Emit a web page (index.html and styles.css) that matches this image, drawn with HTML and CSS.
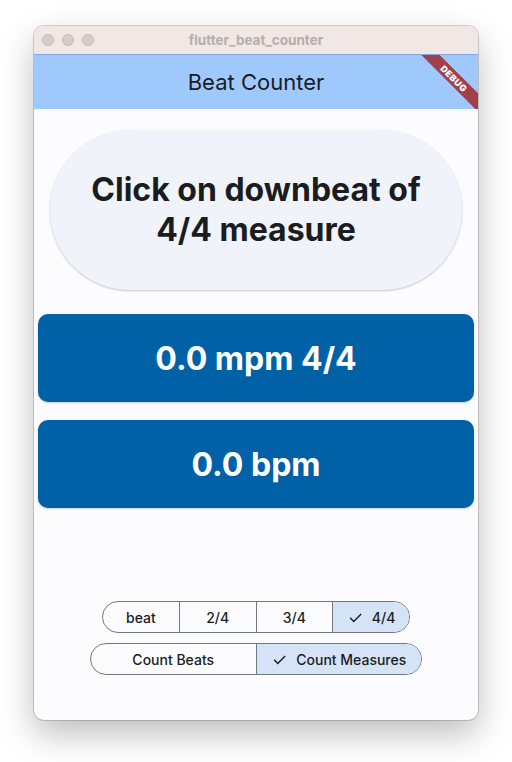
FILE: index.html
```html
<!DOCTYPE html>
<html>
<head>
<meta charset="utf-8">
<link rel="stylesheet" href="styles.css">
</head>
<body>
<div class="window">
  <div class="titlebar">
    <div class="lights"><span class="light"></span><span class="light"></span><span class="light"></span></div>
    <div class="wintitle">flutter_beat_counter</div>
  </div>
  <div class="appbar">
    <div class="apptitle">Beat Counter</div>
    <div class="debug">DEBUG</div>
  </div>
  <div class="content">
    <div class="pill">Click on downbeat of<br>4/4 measure</div>
    <div class="stat stat-first">0.0 mpm 4/4</div>
    <div class="stat">0.0 bpm</div>
    <div class="spacer"></div>
    <div class="seg seg-small">
      <div class="opt">beat</div>
      <div class="opt">2/4</div>
      <div class="opt">3/4</div>
      <div class="opt sel"><svg class="check" viewBox="0 0 24 24"><path d="M4.5 12.5l5 5L20 7"/></svg>4/4</div>
    </div>
    <div class="seg seg-big">
      <div class="opt">Count Beats</div>
      <div class="opt sel"><svg class="check" viewBox="0 0 24 24"><path d="M4.5 12.5l5 5L20 7"/></svg>Count Measures</div>
    </div>
  </div>
</div>
</body>
</html>
```
FILE: styles.css
```css
html, body {
  margin: 0;
  padding: 0;
  background: #ffffff;
}
body {
  padding: 26px 0 0 34px;
  min-height: 762px;
  box-sizing: border-box;
  font-family: Inter, "Noto Sans", sans-serif;
}
.window {
  width: 444px;
  height: 694px;
  border-radius: 10px;
  overflow: hidden;
  background: #fcfcff;
  box-shadow: 0 0 0 1px rgba(0,0,0,0.16), 0 14px 34px rgba(0,0,0,0.26);
  display: flex;
  flex-direction: column;
  position: relative;
}
.titlebar {
  height: 28px;
  background: #f1e8e5;
  display: flex;
  align-items: center;
  position: relative;
  flex-shrink: 0;
}
.lights {
  display: flex;
  gap: 8px;
  padding-left: 8px;
}
.light {
  width: 12px;
  height: 12px;
  box-sizing: border-box;
  border-radius: 50%;
  background: #d6cdcb;
  border: 0.5px solid #c4b9b7;
}
.wintitle {
  position: absolute;
  left: 0;
  right: 0;
  text-align: center;
  font-size: 13.5px;
  font-weight: 700;
  color: #b5adab;
}
.appbar {
  height: 55px;
  background: #9fc9fd;
  border-top: 1px solid #7fa9e6;
  box-sizing: border-box;
  display: flex;
  align-items: center;
  justify-content: center;
  position: relative;
  overflow: hidden;
  flex-shrink: 0;
}
.apptitle {
  font-size: 22px;
  color: #1a1c1e;
}
.debug {
  position: absolute;
  top: 17px;
  right: -26px;
  width: 100px;
  height: 13px;
  line-height: 13px;
  transform: rotate(45deg);
  background: #a1404b;
  color: #ffffff;
  font-size: 9px;
  font-weight: 900;
  text-align: center;
  letter-spacing: 0.4px;
}
.content {
  flex: 1;
  display: flex;
  flex-direction: column;
  align-items: center;
  padding: 21px 4px 45px;
}
.pill {
  width: 412px;
  height: 160px;
  box-sizing: border-box;
  border-radius: 80px;
  background: #f0f3fa;
  box-shadow: 0 1px 2px rgba(0,0,0,0.22);
  display: flex;
  align-items: center;
  justify-content: center;
  text-align: center;
  font-size: 32px;
  line-height: 40px;
  font-weight: 700;
  color: #1a1c1e;
}
.stat {
  width: 100%;
  height: 88px;
  border-radius: 10px;
  background: #0061a6;
  color: #ffffff;
  display: flex;
  align-items: center;
  justify-content: center;
  font-size: 32px;
  font-weight: 700;
  margin-top: 18px;
  box-shadow: 0 1px 2px rgba(0,0,0,0.2);
}
.stat-first {
  margin-top: 24px;
}
.spacer {
  flex: 1;
}
.seg {
  display: flex;
  border: 1px solid #73777f;
  border-radius: 17px;
  overflow: hidden;
  height: 32px;
  box-sizing: border-box;
}
.seg-small {
  width: 308px;
}
.seg-big {
  width: 332px;
  margin-top: 10px;
}
.opt {
  flex: 1;
  display: flex;
  align-items: center;
  justify-content: center;
  font-size: 14px;
  font-weight: 500;
  color: #1a1c1e;
  border-left: 1px solid #73777f;
}
.opt:first-child {
  border-left: none;
}
.opt.sel {
  background: #d5e3f7;
}
.check {
  width: 17px;
  height: 17px;
  margin-right: 8px;
  fill: none;
  stroke: #1a1c1e;
  stroke-width: 2;
}
```
